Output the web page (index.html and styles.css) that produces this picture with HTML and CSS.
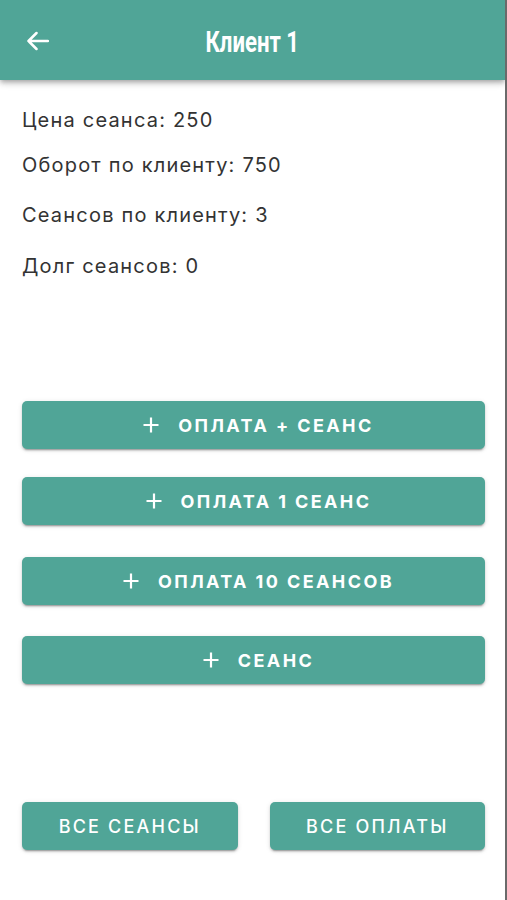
FILE: index.html
```html
<!DOCTYPE html>
<html lang="ru">
<head>
<meta charset="utf-8">
<title>Клиент 1</title>
<link rel="stylesheet" href="styles.css">
</head>
<body>
<div class="page">
  <header class="appbar">
    <button class="back" aria-label="Назад">
      <svg width="22" height="20" viewBox="0 0 22 20"><path d="M1.5 10H21M1.5 10L9.5 2M1.5 10L9.5 18" fill="none" stroke="#fff" stroke-width="2.5" stroke-linecap="round" stroke-linejoin="round"/></svg>
    </button>
    <h1 class="title"><span class="title-text">Клиент 1</span></h1>
  </header>
  <main class="content">
    <ul class="info">
      <li class="info-row r1">Цена сеанса: 250</li>
      <li class="info-row r2">Оборот по клиенту: 750</li>
      <li class="info-row r3">Сеансов по клиенту: 3</li>
      <li class="info-row r4">Долг сеансов: 0</li>
    </ul>
    <div class="actions">
      <button class="btn btn-wide"><svg class="plus" width="16" height="16" viewBox="0 0 16 16"><path d="M8 0.5V15.5M0.5 8H15.5" stroke="#fff" stroke-width="2.2" fill="none"/></svg><span>Оплата + сеанс</span></button>
      <button class="btn btn-wide b2"><svg class="plus" width="16" height="16" viewBox="0 0 16 16"><path d="M8 0.5V15.5M0.5 8H15.5" stroke="#fff" stroke-width="2.2" fill="none"/></svg><span>Оплата 1 сеанс</span></button>
      <button class="btn btn-wide b3"><svg class="plus" width="16" height="16" viewBox="0 0 16 16"><path d="M8 0.5V15.5M0.5 8H15.5" stroke="#fff" stroke-width="2.2" fill="none"/></svg><span>Оплата 10 сеансов</span></button>
      <button class="btn btn-wide b4"><svg class="plus" width="16" height="16" viewBox="0 0 16 16"><path d="M8 0.5V15.5M0.5 8H15.5" stroke="#fff" stroke-width="2.2" fill="none"/></svg><span>Сеанс</span></button>
    </div>
    <div class="bottom">
      <button class="btn btn-half">Все сеансы</button>
      <button class="btn btn-half">Все оплаты</button>
    </div>
  </main>
</div>
</body>
</html>
```
FILE: styles.css
```css
* { box-sizing: border-box; }
html, body { margin: 0; padding: 0; background: #fff; }
body { font-family: Inter, "Noto Sans", "DejaVu Sans", sans-serif; }
.page {
  width: 507px;
  height: 900px;
  border-right: 2px solid #6a6a6a;
  overflow: hidden;
}
.appbar {
  position: relative;
  height: 80px;
  background: #50a597;
  display: flex;
  align-items: center;
  justify-content: center;
  box-shadow: 0 2px 4px -1px rgba(0,0,0,.2), 0 4px 5px 0 rgba(0,0,0,.14), 0 1px 10px 0 rgba(0,0,0,.12);
}
.back {
  position: absolute;
  left: 27px;
  top: 31px;
  background: none;
  border: 0;
  padding: 0;
  width: 22px;
  height: 20px;
  display: flex;
}
.title {
  margin: 0;
  color: #fff;
  font-family: Roboto, "Liberation Sans", sans-serif;
  font-weight: 700;
  font-size: 30px;
  line-height: 1;
  padding-top: 4px;
}
.title-text {
  display: inline-block;
  transform: scaleX(0.74);
}
.content {
  padding: 0 20px 0 22px;
}
.info {
  list-style: none;
  margin: 0;
  padding: 0;
  color: #333;
  font-size: 20px;
  letter-spacing: 1.2px;
  line-height: 24px;
}
.r1 { margin-top: 28px; }
.r2 { margin-top: 21px; }
.r3 { margin-top: 26px; }
.r4 { margin-top: 27px; }
.actions {
  margin-top: 123px;
  display: flex;
  flex-direction: column;
}
.b2 { margin-top: 28px; }
.b3 { margin-top: 32px; }
.b4 { margin-top: 31px; }
.btn {
  height: 48px;
  border: 0;
  border-radius: 5px;
  background: #50a597;
  color: #fff;
  font-family: Inter, "Noto Sans", "DejaVu Sans", sans-serif;
  text-transform: uppercase;
  display: flex;
  align-items: center;
  justify-content: center;
  box-shadow: 0 3px 1px -2px rgba(0,0,0,.2), 0 2px 2px 0 rgba(0,0,0,.14), 0 1px 5px 0 rgba(0,0,0,.12);
  padding: 0;
}
.btn-wide {
  width: 100%;
  font-size: 18px;
  font-weight: 700;
  letter-spacing: 2.4px;
  gap: 19px;
  padding-left: 10px;
}
.plus { flex: none; }
.bottom {
  margin-top: 118px;
  display: flex;
  gap: 32px;
}
.btn-half {
  flex: 1;
  font-size: 18px;
  font-weight: 500;
  letter-spacing: 2.2px;
}
```
